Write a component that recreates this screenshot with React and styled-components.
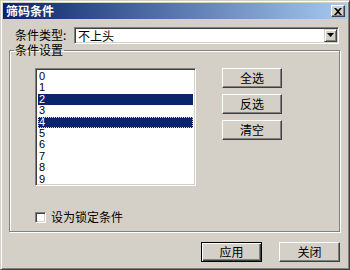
import React from 'react'
import styled, { createGlobalStyle } from 'styled-components'

const Global = createGlobalStyle`
  html, body { margin: 0; padding: 0; background: #d4d0c8; }
  body { font-family: "Noto Sans CJK SC", "Liberation Sans", sans-serif; font-size: 12px; color: #000; }
`

const Frame = styled.div`
  width: 350px;
  height: 270px;
  box-sizing: border-box;
  background: #d4d0c8;
  border: 1px solid;
  border-color: #d4d0c8 #404040 #404040 #d4d0c8;
  box-shadow: inset 1px 1px 0 #fff, inset -1px -1px 0 #808080;
  padding: 2px;
  display: flex;
  flex-direction: column;
`

const TitleBar = styled.div`
  height: 16px;
  background: linear-gradient(to right, #0a246a, #a6caf0);
  display: flex;
  align-items: center;
  justify-content: space-between;
  padding: 0 2px 0 3px;
  color: #fff;
  font-weight: bold;
  font-size: 12px;
  line-height: 14px;
`

const CloseBtn = styled.div`
  width: 14px;
  height: 12px;
  box-sizing: border-box;
  background: #d4d0c8;
  border: 1px solid;
  border-color: #fff #404040 #404040 #fff;
  box-shadow: inset -1px -1px 0 #808080;
  display: flex;
  align-items: center;
  justify-content: center;
`

const Body = styled.div`
  flex: 1;
  display: flex;
  flex-direction: column;
  padding: 8px 7px 0 6px;
`

const TypeRow = styled.div`
  display: flex;
  align-items: center;
  height: 16px;
  padding-left: 6px;
`

const Label = styled.span`
  width: 59px;
  white-space: nowrap;
  line-height: 12px;
`

const Combo = styled.div`
  flex: 1;
  height: 17px;
  box-sizing: border-box;
  background: #fff;
  border: 1px solid;
  border-color: #808080 #fff #fff #808080;
  box-shadow: inset 1px 1px 0 #404040, inset -1px -1px 0 #d4d0c8;
  display: flex;
  align-items: center;
  padding: 1px 1px 1px 3px;
  margin-right: 1px;
`

const ComboText = styled.span`
  flex: 1;
  line-height: 13px;
`

const DropBtn = styled.div`
  width: 13px;
  height: 13px;
  box-sizing: border-box;
  background: #d4d0c8;
  border: 1px solid;
  border-color: #d4d0c8 #404040 #404040 #d4d0c8;
  box-shadow: inset 1px 1px 0 #fff, inset -1px -1px 0 #808080;
  display: flex;
  align-items: center;
  justify-content: center;
`

const Group = styled.fieldset`
  margin: 1px 0 0 0;
  padding: 0;
  border: 1px solid #808080;
  box-shadow: inset 1px 1px 0 #fff, 1px 1px 0 #fff;
`

const Legend = styled.legend`
  margin-left: 4px;
  padding: 0 1px;
  height: 12px;
  line-height: 12px;
  font-size: 12px;
`

const GroupInner = styled.div`
  height: 175px;
  box-sizing: border-box;
  display: flex;
  flex-direction: column;
  padding: 12px 0 7px 25px;
`

const GroupTop = styled.div`
  display: flex;
  gap: 26px;
`

const ListBox = styled.div`
  width: 161px;
  height: 118px;
  box-sizing: border-box;
  background: #fff;
  border: 1px solid;
  border-color: #808080 #fff #fff #808080;
  box-shadow: inset 1px 1px 0 #404040, inset -1px -1px 0 #d4d0c8;
  padding: 2px 2px 0 2px;
  font-family: "Liberation Sans", sans-serif;
  font-size: 11px;
`

const Item = styled.div`
  height: 11.4px;
  line-height: 11.4px;
  padding-left: 1px;
  box-sizing: border-box;
  background: ${p => (p.$sel ? '#0a246a' : 'transparent')};
  color: ${p => (p.$sel ? '#fff' : '#000')};
  outline: ${p => (p.$focus ? '1px dotted #d4d0c8' : 'none')};
  outline-offset: -1px;
`

const SideButtons = styled.div`
  display: flex;
  flex-direction: column;
  gap: 6px;
`

const Button = styled.div`
  width: ${p => p.$w || 60}px;
  height: 20px;
  box-sizing: border-box;
  background: #d4d0c8;
  border: 1px solid;
  border-color: ${p => (p.$default ? '#000' : '#fff #404040 #404040 #fff')};
  box-shadow: ${p =>
    p.$default
      ? 'inset 1px 1px 0 #fff, inset -1px -1px 0 #404040, inset -2px -2px 0 #808080'
      : 'inset -1px -1px 0 #808080'};
  display: flex;
  align-items: center;
  justify-content: center;
  font-size: 12px;
  line-height: 14px;
`

const CheckRow = styled.label`
  display: flex;
  align-items: center;
  gap: 5px;
  margin-top: auto;
  line-height: 14px;
`

const Check = styled.span`
  width: 11px;
  height: 11px;
  box-sizing: border-box;
  background: #fff;
  border: 1px solid;
  border-color: #808080 #fff #fff #808080;
  box-shadow: inset 1px 1px 0 #404040, inset -1px -1px 0 #d4d0c8;
`

const Footer = styled.div`
  display: flex;
  justify-content: flex-end;
  gap: 17px;
  margin-top: 10px;
`

const items = ['0', '1', '2', '3', '4', '5', '6', '7', '8', '9']

export default function App() {
  return (
    <>
      <Global />
      <Frame>
        <TitleBar>
          <span>筛码条件</span>
          <CloseBtn>
            <svg width="8" height="7" viewBox="0 0 8 7">
              <path d="M0 0h2l2 2 2-2h2L5 3.5 8 7H6L4 5 2 7H0l3-3.5z" fill="#000" />
            </svg>
          </CloseBtn>
        </TitleBar>
        <Body>
          <TypeRow>
            <Label>条件类型:</Label>
            <Combo>
              <ComboText>不上头</ComboText>
              <DropBtn>
                <svg width="7" height="4" viewBox="0 0 7 4">
                  <path d="M0 0h7L3.5 4z" fill="#000" />
                </svg>
              </DropBtn>
            </Combo>
          </TypeRow>
          <Group>
            <Legend>条件设置</Legend>
            <GroupInner>
              <GroupTop>
                <ListBox>
                  {items.map(n => (
                    <Item key={n} $sel={n === '2' || n === '4'} $focus={n === '4'}>
                      {n}
                    </Item>
                  ))}
                </ListBox>
                <SideButtons>
                  <Button>全选</Button>
                  <Button>反选</Button>
                  <Button>清空</Button>
                </SideButtons>
              </GroupTop>
              <CheckRow>
                <Check />
                <span>设为锁定条件</span>
              </CheckRow>
            </GroupInner>
          </Group>
          <Footer>
            <Button $default $w={61}>应用</Button>
            <Button $w={61}>关闭</Button>
          </Footer>
        </Body>
      </Frame>
    </>
  )
}
